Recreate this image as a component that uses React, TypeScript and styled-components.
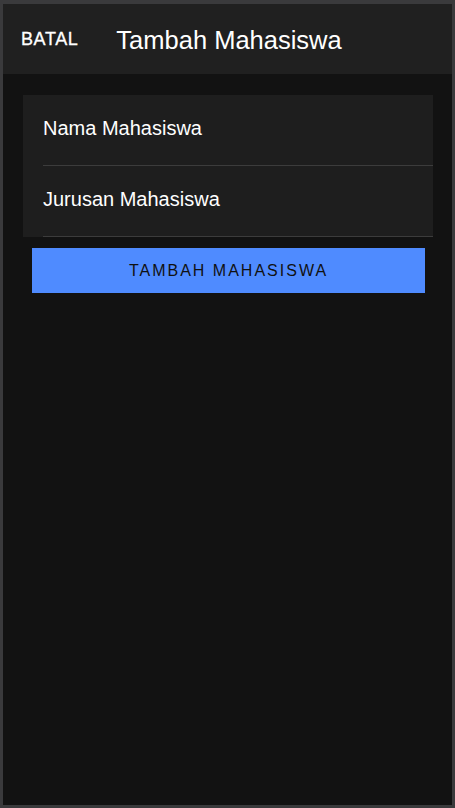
import React from "react";
import styled, { createGlobalStyle } from "styled-components";

const Global = createGlobalStyle`
  html, body { margin: 0; padding: 0; background: #3a3a3c; }
  body { font-family: "Liberation Sans", Arial, sans-serif; }
`;

const Frame = styled.div`
  box-sizing: border-box;
  width: 455px;
  height: 808px;
  padding: 4px 3px 3px 3px;
  background: #3a3a3c;
  display: flex;
`;

const Screen = styled.div`
  flex: 1;
  display: flex;
  flex-direction: column;
  background: #121212;
`;

const Header = styled.header`
  height: 70px;
  background: #202020;
  display: flex;
  align-items: center;
  padding-left: 18px;
  gap: 38px;
`;

const CancelText = styled.span`
  color: #ffffff;
  font-size: 18px;
  font-weight: 400;
  letter-spacing: 0.6px;
  -webkit-text-stroke: 0.3px #ffffff;
`;

const Title = styled.h1`
  margin: 2px 0 0 0;
  color: #ffffff;
  font-size: 25.5px;
  font-weight: 400;
`;

const Content = styled.main`
  padding: 21px 19px 0 20px;
  display: flex;
  flex-direction: column;
`;

const Card = styled.div`
  background: #1e1e1e;
  display: flex;
  flex-direction: column;
`;

const Field = styled.div`
  height: 70px;
  margin-left: 20px;
  border-bottom: 1px solid #3c3c3c;
  display: flex;
  align-items: center;
`;

const FieldInput = styled.input`
  flex: 1;
  background: transparent;
  border: none;
  outline: none;
  color: #ffffff;
  font-family: "Liberation Sans", Arial, sans-serif;
  font-size: 20px;
  padding: 0;
  margin-top: -3px;
  &::placeholder { color: #ffffff; opacity: 1; }
`;

const SubmitButton = styled.button`
  margin: 11px 8px 0 9px;
  height: 45px;
  background: #4f8bff;
  border: none;
  color: #111111;
  font-family: "Liberation Sans", Arial, sans-serif;
  font-size: 16px;
  letter-spacing: 2px;
  text-transform: uppercase;
  display: flex;
  align-items: center;
  justify-content: center;
`;

export default function App() {
  return (
    <>
      <Global />
      <Frame>
        <Screen>
          <Header>
            <CancelText>BATAL</CancelText>
            <Title>Tambah Mahasiswa</Title>
          </Header>
          <Content>
            <Card>
              <Field>
                <FieldInput placeholder="Nama Mahasiswa" />
              </Field>
              <Field>
                <FieldInput placeholder="Jurusan Mahasiswa" />
              </Field>
            </Card>
            <SubmitButton>Tambah Mahasiswa</SubmitButton>
          </Content>
        </Screen>
      </Frame>
    </>
  );
}
